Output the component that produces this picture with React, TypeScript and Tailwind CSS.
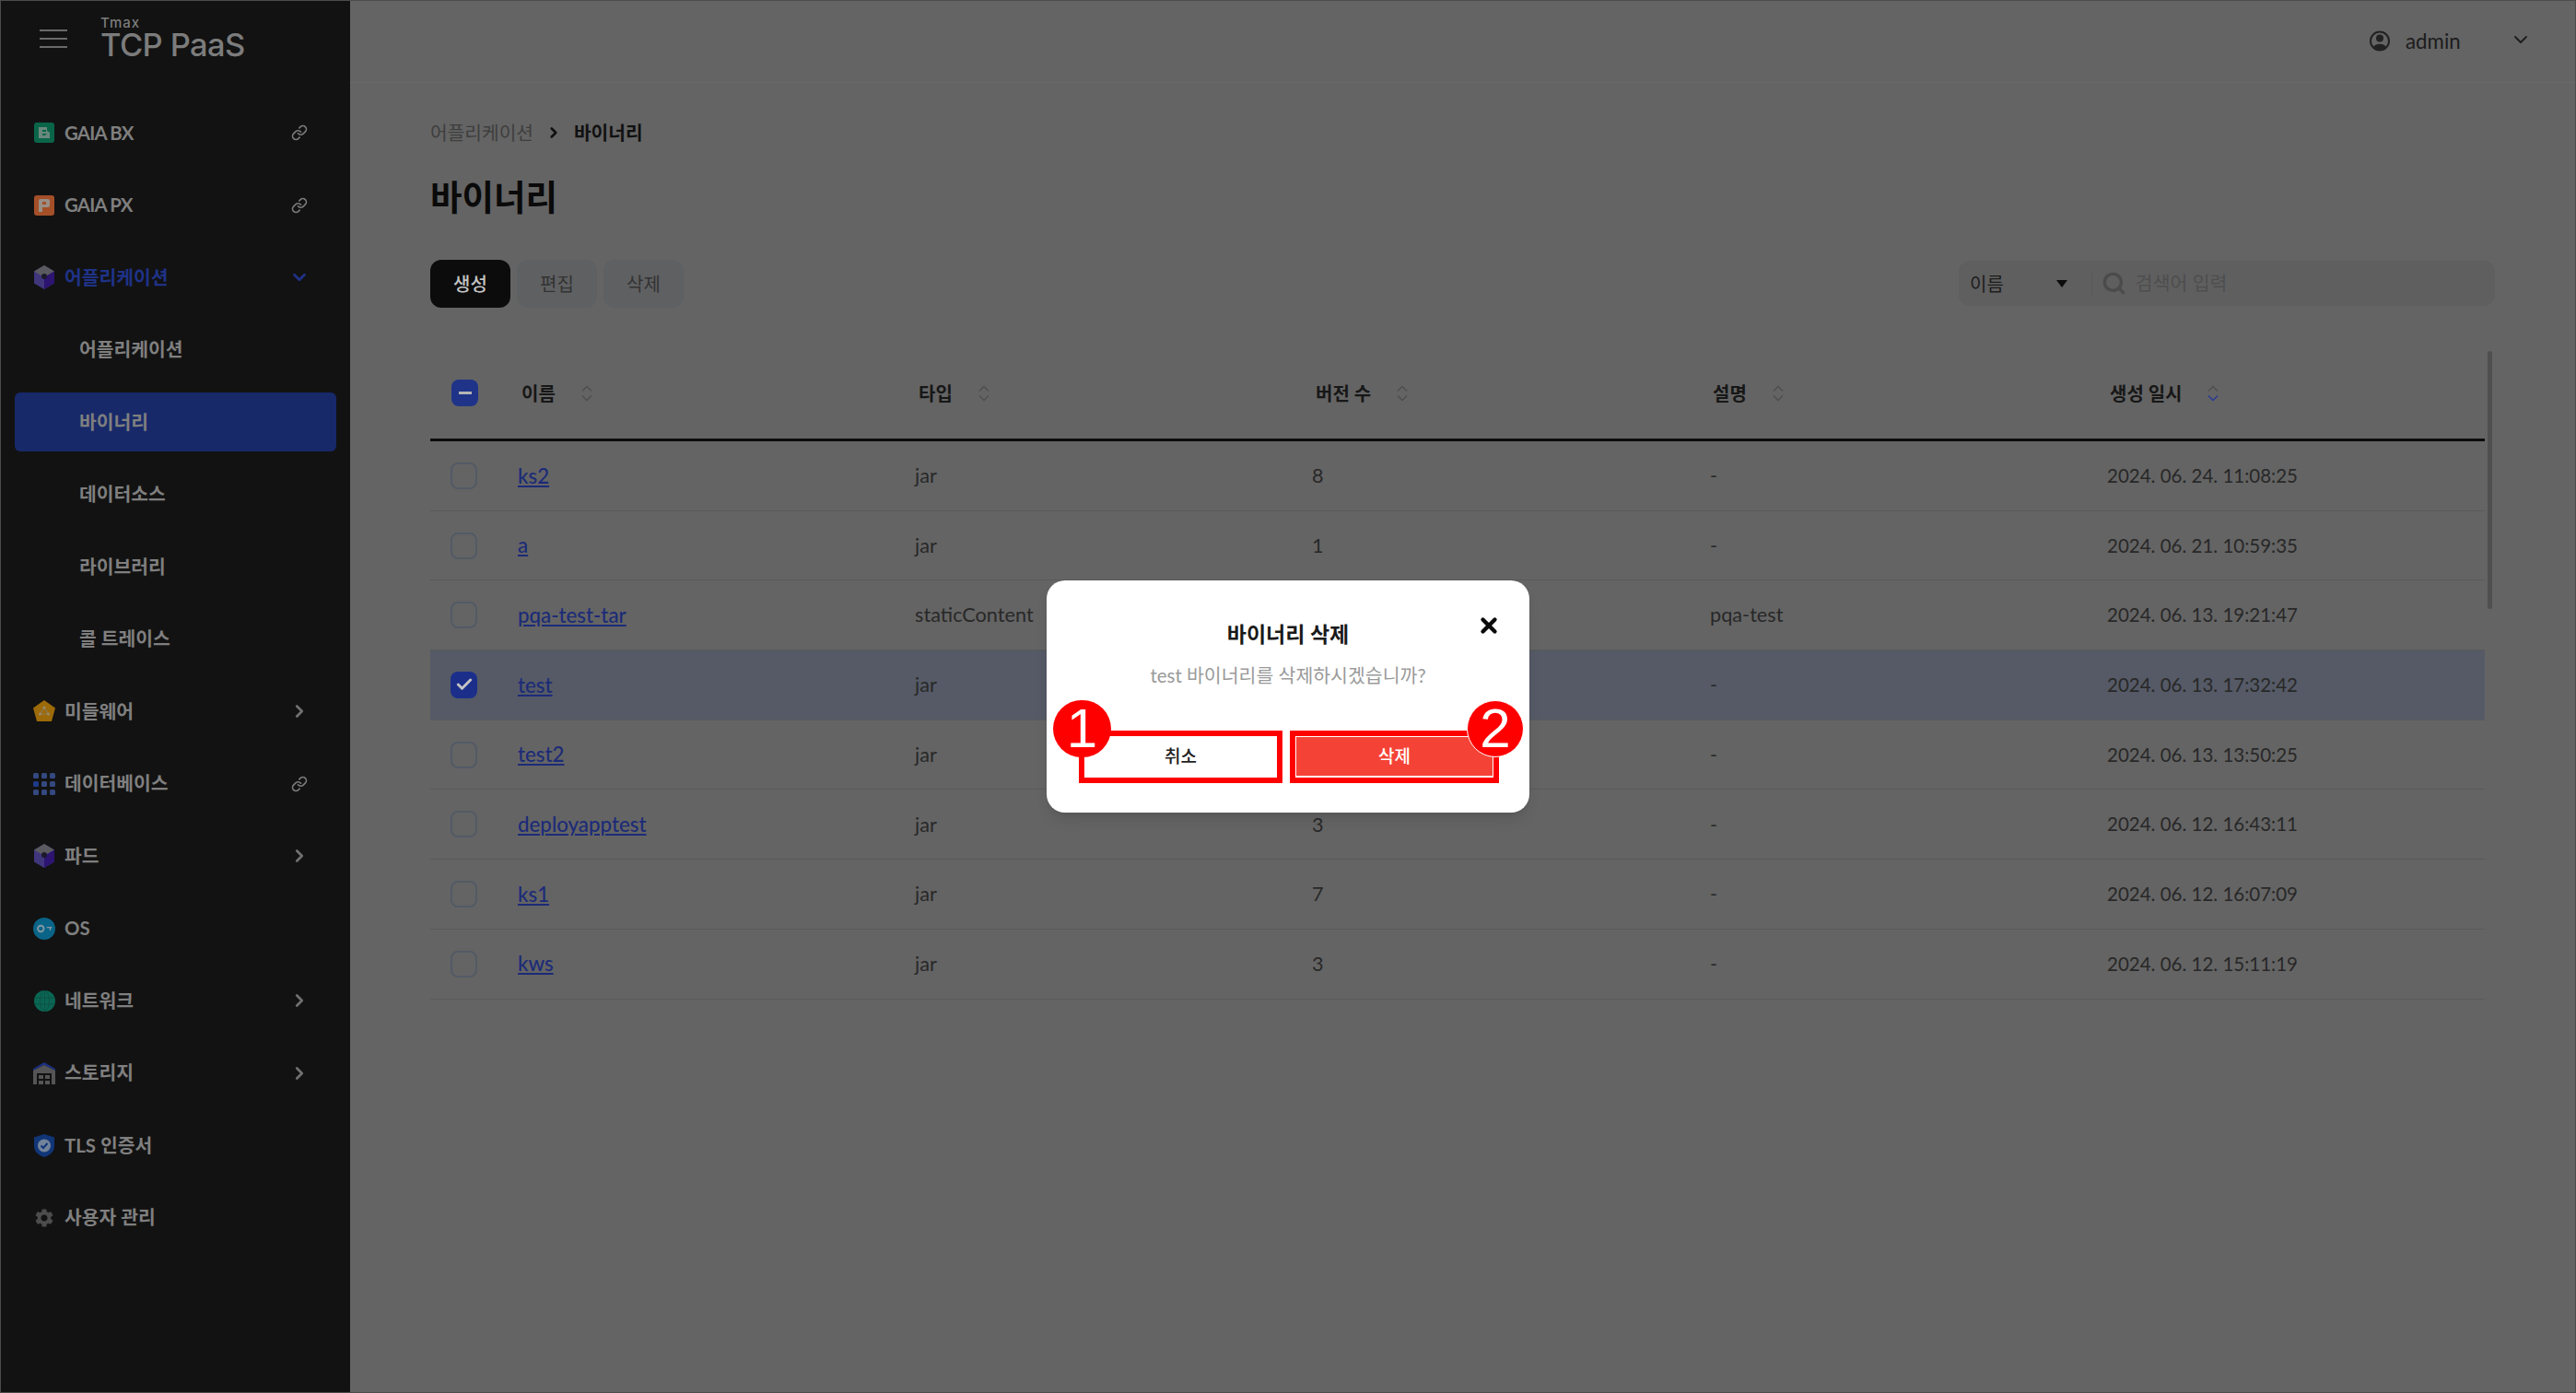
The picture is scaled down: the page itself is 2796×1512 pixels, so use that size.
import React from "react";
import { ChevronDown, ChevronRight, Link as LinkIcon, Check, Search, X } from "lucide-react";
import { MdSettings } from "react-icons/md";

const Cube = () => (
  <svg width="24" height="26" viewBox="0 0 24 26">
    <polygon points="12,0 23,6.5 23,19.5 12,26 1,19.5 1,6.5" fill="#40367c" />
    <polygon points="12,0 23,6.5 12,13 1,6.5" fill="#5a5a60" />
    <polygon points="12,13 23,6.5 23,19.5 12,26" fill="#2c1470" />
    <circle cx="12" cy="12" r="3" fill="#1a1a2a" />
  </svg>
);

const icons: Record<string, React.ReactNode> = {
  bx: (
    <svg width="22" height="22" viewBox="0 0 22 22">
      <rect width="22" height="22" rx="3" fill="#0a6548" />
      <path d="M5 5 H14 V9 L17 11 V17 H5 Z" fill="#6a887d" />
      <rect x="9" y="8" width="4" height="2" fill="#0a6548" />
      <path d="M9 12 H14 L12 14 H9 Z" fill="#0a6548" />
    </svg>
  ),
  px: (
    <svg width="22" height="22" viewBox="0 0 22 22">
      <rect width="22" height="22" rx="3" fill="#a54f28" />
      <rect x="5" y="4" width="12" height="9" rx="2" fill="#988f87" />
      <rect x="5" y="12" width="4" height="6" fill="#988f87" />
      <rect x="9" y="7" width="4" height="3" fill="#a54f28" />
    </svg>
  ),
  cube: <Cube />,
  pent: (
    <svg width="24" height="24" viewBox="0 0 24 24">
      <polygon points="12,0 24,8.5 20,23 4,23 0,8.5" fill="#9c6a08" />
      <path d="M12 8 L7.5 15 H16.5 Z" fill="none" stroke="#8a7a58" strokeWidth="1.2" />
      <circle cx="12" cy="8" r="1.6" fill="#9a8a68" />
      <circle cx="7.5" cy="15" r="1.6" fill="#9a8a68" />
      <circle cx="16.5" cy="15" r="1.6" fill="#9a8a68" />
    </svg>
  ),
  grid: (
    <svg width="24" height="24" viewBox="0 0 24 24">
      {[0, 1, 2].map((r) =>
        [0, 1, 2].map((c) => (
          <rect key={`${r}${c}`} x={c * 9} y={r * 9} width="6" height="6" rx="1.5" fill={r === 1 && c === 0 ? "#1f3a8a" : "#34497f"} />
        ))
      )}
    </svg>
  ),
  os: (
    <svg width="26" height="26" viewBox="0 0 26 26">
      <circle cx="13" cy="13" r="13" fill="#0a6488" />
      <circle cx="9" cy="13" r="3.5" fill="none" stroke="#8398a3" strokeWidth="2" />
      <path d="M16 11.5 H22 M20 11.5 V15" stroke="#8398a3" strokeWidth="1.6" fill="none" />
    </svg>
  ),
  globe: (
    <svg width="23" height="23" viewBox="0 0 23 23">
      <circle cx="11.5" cy="11.5" r="11.5" fill="#0a6653" />
      <ellipse cx="11.5" cy="11.5" rx="5" ry="11" fill="none" stroke="#0c5245" strokeWidth="1" />
      <path d="M0.5 8 H22.5 M0.5 15 H22.5 M11.5 0 V23" stroke="#0c5245" strokeWidth="1" />
    </svg>
  ),
  store: (
    <svg width="24" height="24" viewBox="0 0 24 24">
      <path d="M0 7 L12 0 L24 7 V9 L12 3 L0 9 Z" fill="#1c2f80" />
      <path d="M0 9 L12 3 L24 9 V24 H20 V12 H4 V24 H0 Z" fill="#555555" />
      <rect x="6" y="14" width="5" height="4" fill="#555555" />
      <rect x="13" y="14" width="5" height="4" fill="#555555" />
      <rect x="6" y="20" width="5" height="4" fill="#555555" />
      <rect x="13" y="20" width="5" height="4" fill="#555555" />
    </svg>
  ),
  shield: (
    <svg width="22" height="25" viewBox="0 0 22 25">
      <path d="M11 0 L22 3.5 V13 C22 19 17 23 11 25 C5 23 0 19 0 13 V3.5 Z" fill="#113678" />
      <circle cx="11" cy="12.5" r="7" fill="#72839a" />
      <path d="M7.5 12.5 L10 15 L14.5 10" fill="none" stroke="#113678" strokeWidth="2" />
    </svg>
  ),
  gear: <MdSettings size={28} color="#4c4c4c" />,
};

type NavItem = { icon?: string; label: string; right?: "link" | "right" | "down"; sub?: boolean; active?: boolean; blue?: boolean; tight?: boolean };

const nav: NavItem[] = [
  { icon: "bx", label: "GAIA BX", right: "link", tight: true },
  { icon: "px", label: "GAIA PX", right: "link", tight: true },
  { icon: "cube", label: "어플리케이션", right: "down", blue: true },
  { label: "어플리케이션", sub: true },
  { label: "바이너리", sub: true, active: true },
  { label: "데이터소스", sub: true },
  { label: "라이브러리", sub: true },
  { label: "콜 트레이스", sub: true },
  { icon: "pent", label: "미들웨어", right: "right" },
  { icon: "grid", label: "데이터베이스", right: "link" },
  { icon: "cube", label: "파드", right: "right" },
  { icon: "os", label: "OS" },
  { icon: "globe", label: "네트워크", right: "right" },
  { icon: "store", label: "스토리지", right: "right" },
  { icon: "shield", label: "TLS 인증서" },
  { icon: "gear", label: "사용자 관리" },
];

const rows = [
  { name: "ks2", type: "jar", ver: "8", desc: "-", date: "2024. 06. 24. 11:08:25" },
  { name: "a", type: "jar", ver: "1", desc: "-", date: "2024. 06. 21. 10:59:35" },
  { name: "pqa-test-tar", type: "staticContent", ver: "", desc: "pqa-test", date: "2024. 06. 13. 19:21:47" },
  { name: "test", type: "jar", ver: "", desc: "-", date: "2024. 06. 13. 17:32:42", selected: true },
  { name: "test2", type: "jar", ver: "", desc: "-", date: "2024. 06. 13. 13:50:25" },
  { name: "deployapptest", type: "jar", ver: "3", desc: "-", date: "2024. 06. 12. 16:43:11" },
  { name: "ks1", type: "jar", ver: "7", desc: "-", date: "2024. 06. 12. 16:07:09" },
  { name: "kws", type: "jar", ver: "3", desc: "-", date: "2024. 06. 12. 15:11:19" },
];

const Sort = ({ active }: { active?: boolean }) => (
  <svg width="14" height="18" viewBox="0 0 14 18" fill="none" strokeWidth="1.3" className="ml-[27px]">
    <path d="M2 6.5 L7 1.5 L12 6.5" stroke="#4e4e4e" />
    <path d="M2 11.5 L7 16.5 L12 11.5" stroke={active ? "#24389a" : "#4e4e4e"} />
  </svg>
);

function NavRow({ item }: { item: NavItem }) {
  if (item.sub) {
    return item.active ? (
      <div className="flex h-[78.5px] items-center px-[15px]">
        <div className="flex h-[64px] w-full items-center rounded-md bg-[#18296a] pl-[70px] text-[#7f7f7f]">{item.label}</div>
      </div>
    ) : (
      <div className="flex h-[78.5px] items-center pl-[85px] text-[#7f7f7f]">{item.label}</div>
    );
  }
  return (
    <div className={`flex h-[78.5px] items-center pl-[35px] pr-[44px] ${item.blue ? "text-[#1f3288]" : "text-[#7f7f7f]"}`}>
      <span className="flex w-[24px] justify-center">{icons[item.icon!]}</span>
      <span className={`ml-[10px] ${item.tight ? "tracking-[-0.8px]" : ""}`}>{item.label}</span>
      <span className="ml-auto flex w-[22px] justify-center">
        {item.right === "link" && <LinkIcon size={18} strokeWidth={2.2} color="#7a7a7a" />}
        {item.right === "right" && <ChevronRight size={26} strokeWidth={3} color="#707070" />}
        {item.right === "down" && <ChevronDown size={26} strokeWidth={3} color="#1f3288" />}
      </span>
    </div>
  );
}

export default function App() {
  return (
    <div className="relative flex h-[1512px] w-full overflow-hidden border border-[#4c4c4c] bg-[#646464] text-[21.7px] [font-family:Lato,'Noto_Sans_CJK_KR',sans-serif]">
      <aside className="w-[379px] shrink-0 bg-[#121212] text-[20.4px] font-bold">
        <div className="flex h-[104px] items-start pl-[42px]">
          <svg width="30" height="22" viewBox="0 0 30 22" className="mt-[30px]" stroke="#6a6a6a" strokeWidth="2">
            <path d="M0 2 H30 M0 11 H30 M0 20 H30" />
          </svg>
          <div className="ml-[36px] mt-[17px] font-medium text-[#7c7c7c] [font-family:Inter,sans-serif]">
            <div className="h-[13px] text-[15px] leading-[13px] tracking-[1px]">Tmax</div>
            <div className="mt-[1px] text-[34.5px] leading-[34px] tracking-[-0.6px]">TCP PaaS</div>
          </div>
        </div>
        {nav.map((item, i) => (
          <NavRow key={i} item={item} />
        ))}
      </aside>

      <main className="flex min-w-0 flex-1 flex-col">
        <header className="flex h-[89px] shrink-0 items-center justify-end border-b border-[#6b6b6b] pr-[47px] text-[#1c1c1c]">
          <svg width="22" height="23" viewBox="0 0 22 23" className="mt-[-2px]">
            <circle cx="11" cy="11.5" r="10" fill="none" stroke="#222" strokeWidth="2" />
            <circle cx="11" cy="8.5" r="4" fill="#222" />
            <path d="M4 18 C6 13.5 16 13.5 18 18 C15 22 7 22 4 18 Z" fill="#222" />
          </svg>
          <span className="ml-[17px] w-[113px] text-[22.3px]">admin</span>
          <ChevronDown size={24} strokeWidth={1.8} color="#1c1c1c" className="mt-[-4px]" />
        </header>

        <div className="flex flex-1 flex-col pl-[87px] pr-[98px] pt-[40px]">
          <nav className="flex h-[28px] items-center text-[20.3px]">
            <span className="text-[#3e3e3e]">어플리케이션</span>
            <ChevronRight size={18} strokeWidth={3.5} color="#111" className="ml-[13px]" />
            <span className="ml-[13px] font-bold text-[#111]">바이너리</span>
          </nav>
          <h1 className="mt-[31px] h-[50px] text-[37.5px] font-bold leading-[50px] text-[#0a0a0a]">바이너리</h1>

          <div className="mt-[43px] flex items-start justify-between">
            <div className="flex gap-[7px] text-[20px]">
              <button className="h-[52px] w-[87px] rounded-xl bg-[#0c0c0c] font-medium text-[#c4c4c4]">생성</button>
              <button className="h-[52px] w-[87px] rounded-xl bg-[#5f6062] text-[#333333]">편집</button>
              <button className="h-[52px] w-[87px] rounded-xl bg-[#5f6062] text-[#333333]">삭제</button>
            </div>
            <div className="-mr-[11px] mt-[1px] flex h-[49px] w-[582px] items-center rounded-xl bg-[#5f5f5f] pl-[12px] text-[20px]">
              <span className="text-[#1c1c1c]">이름</span>
              <svg width="12" height="8" viewBox="0 0 12 8" className="ml-[57px]">
                <polygon points="0,0 12,0 6,8" fill="#0c0c0c" />
              </svg>
              <span className="ml-[26px] h-[28px] w-px bg-[#5a5a5a]" />
              <Search size={27} strokeWidth={3} color="#4b4b4b" className="ml-[10px]" />
              <span className="ml-[10px] text-[20.5px] text-[#4e4e4e]">검색어 입력</span>
            </div>
          </div>

          <div className="relative mt-[43px]">
            <div className="flex h-[102px] items-center border-b-[3px] border-[#0c0c0c] text-[20px] font-bold text-[#171717]">
              <div className="w-[99px] pl-[23px]">
                <span className="flex h-[29px] w-[29px] items-center justify-center rounded-lg bg-[#1f3488]">
                  <span className="h-[3px] w-[14px] bg-[#b5b5b5]" />
                </span>
              </div>
              <div className="flex w-[431px] items-center">이름<Sort /></div>
              <div className="flex w-[431px] items-center">타입<Sort /></div>
              <div className="flex w-[431px] items-center">버전 수<Sort /></div>
              <div className="flex w-[431px] items-center">설명<Sort /></div>
              <div className="flex items-center">생성 일시<Sort active /></div>
            </div>
            {rows.map((r) => (
              <div key={r.name} className={`flex h-[75.7px] items-center border-b border-[#5a5a5a] text-[#282828] ${r.selected ? "bg-[#555a66]" : ""}`}>
                <div className="w-[95px] pl-[22px]">
                  {r.selected ? (
                    <span className="flex h-[29px] w-[29px] items-center justify-center rounded-lg bg-[#1b2f8a]">
                      <Check size={20} strokeWidth={3.5} color="#c4c4c4" />
                    </span>
                  ) : (
                    <span className="block h-[29px] w-[29px] rounded-lg border-2 border-[#535a66]" />
                  )}
                </div>
                <a className="w-[431px] text-[22.3px] font-medium text-[#1c2b78] underline">{r.name}</a>
                <div className="w-[431px]">{r.type}</div>
                <div className="w-[432px]">{r.ver}</div>
                <div className="w-[431px]">{r.desc}</div>
                <div className="text-[20.5px]">{r.date}</div>
              </div>
            ))}
            <div className="absolute left-[2233px] top-[4px] h-[280px] w-[5px] rounded-full bg-[#4f4f4f]" />
          </div>
        </div>
      </main>

      <div className="absolute inset-0 flex items-center justify-center">
        <div className="relative h-[252px] w-[524px] rounded-[20px] bg-white pt-[40px] shadow-lg">
          <h2 className="h-[36px] text-center text-[23px] font-bold leading-[36px] text-[#1a1a1a]">바이너리 삭제</h2>
          <p className="mt-[9px] h-[36px] text-center text-[20.5px] leading-[36px] text-[#9a9a9a]">test 바이너리를 삭제하시겠습니까?</p>
          <X size={26} strokeWidth={4} color="#0a0a0a" className="absolute right-[31px] top-[36px]" />
          <div className="mt-[48px] flex gap-[20px] pl-[41px] text-[19px] font-medium">
            <button className="h-[44px] w-[209px] bg-white text-[#222]">취소</button>
            <button className="h-[44px] w-[215px] border border-white bg-[#f44336] text-white">삭제</button>
          </div>
          <div className="absolute left-[35px] top-[163px] h-[57px] w-[221px] border-[6px] border-[#ff0000]" />
          <div className="absolute left-[264px] top-[163px] h-[57px] w-[227px] border-[6px] border-[#ff0000]" />
          <div className="absolute left-[7px] top-[130px] flex h-[62px] w-[63px] items-center justify-center rounded-full bg-[#ff0000] text-[60px] leading-none text-white [font-family:'Liberation_Sans',sans-serif]">1</div>
          <div className="absolute left-[456px] top-[130px] flex h-[62px] w-[62px] items-center justify-center rounded-full border border-white bg-[#ff0000] text-[60px] leading-none text-white [font-family:'Liberation_Sans',sans-serif]">2</div>
        </div>
      </div>
    </div>
  );
}
